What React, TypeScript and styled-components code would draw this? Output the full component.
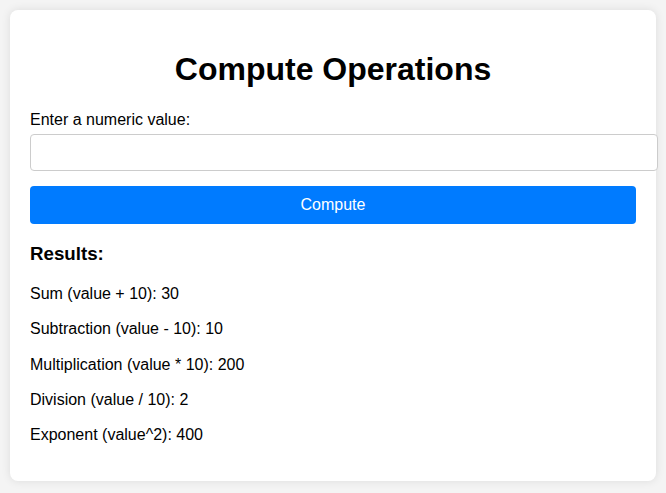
import styled, { createGlobalStyle } from 'styled-components';

const GlobalStyle = createGlobalStyle`
  body {
    margin: 0;
    padding: 10px;
    background-color: #f4f4f4;
    font-family: Arial, "Liberation Sans", sans-serif;
  }
`;

const results = [
  { label: 'Sum (value + 10)', value: 30 },
  { label: 'Subtraction (value - 10)', value: 10 },
  { label: 'Multiplication (value * 10)', value: 200 },
  { label: 'Division (value / 10)', value: 2 },
  { label: 'Exponent (value^2)', value: 400 },
];

export default function App() {
  return (
    <>
      <GlobalStyle />
      <Card>
        <Title>Compute Operations</Title>
        <Label htmlFor="num">Enter a numeric value:</Label>
        <Input id="num" type="text" />
        <Button>Compute</Button>
        <ResultsTitle>Results:</ResultsTitle>
        {results.map((r) => (
          <ResultLine key={r.label}>
            {r.label}: {r.value}
          </ResultLine>
        ))}
      </Card>
    </>
  );
}

const Card = styled.div`
  background-color: #fff;
  padding: 20px;
  border-radius: 8px;
  box-shadow: 0 0 10px rgba(0, 0, 0, 0.1);
`;

const Title = styled.h1`
  text-align: center;
  font-size: 32px;
  margin: 21px 0 23px;
`;

const Label = styled.label`
  display: block;
  font-size: 16px;
  margin-bottom: 5px;
`;

const Input = styled.input`
  width: 100%;
  padding: 10px;
  margin-bottom: 15px;
  border: 1px solid #ccc;
  border-radius: 4px;
  font-family: Arial, "Liberation Sans", sans-serif;
`;

const Button = styled.button`
  display: block;
  width: 100%;
  height: 38px;
  padding: 10px;
  background-color: #007bff;
  color: #fff;
  border: none;
  border-radius: 4px;
  font-size: 16px;
  font-family: Arial, "Liberation Sans", sans-serif;
  cursor: pointer;
`;

const ResultsTitle = styled.h3`
  font-size: 18.72px;
  margin: 19px 0 20px;
`;

const ResultLine = styled.p`
  font-size: 16px;
  line-height: 18.25px;
  margin: 17px 0;
`;
